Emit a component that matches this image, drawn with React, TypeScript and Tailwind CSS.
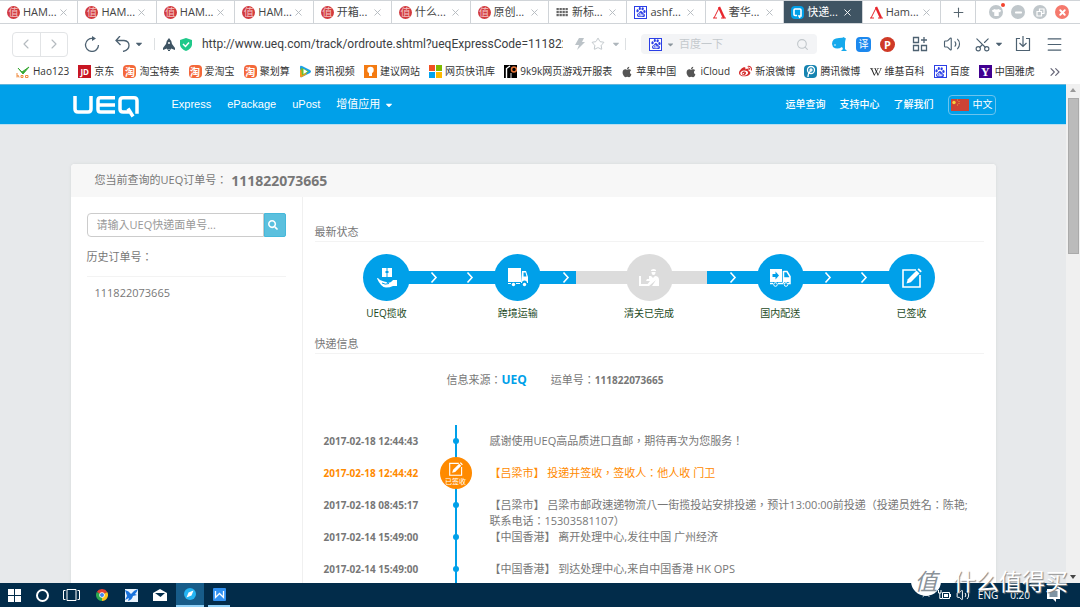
import { useState } from "react"
import type { ReactNode } from "react"
import {
  ChevronLeft,
  ChevronRight,
  ChevronsRight,
  ChevronUp,
  Menu,
  Minus,
  Plus,
  Scissors,
  Search,
  Star,
  Volume2,
  X,
} from "lucide-react"
import { FaApple, FaCaretDown, FaSearch, FaTshirt, FaWeibo, FaWikipediaW } from "react-icons/fa"
import { SiBaidu } from "react-icons/si"

/* ---------- small icons ---------- */

function Tile({ className, children }: { className: string; children?: ReactNode }) {
  return (
    <span
      className={`flex size-[13px] shrink-0 items-center justify-center overflow-hidden leading-none ${className}`}
    >
      {children}
    </span>
  )
}

function ZhiIcon() {
  return <Tile className="rounded-full bg-[#d23a3e] text-[10px] text-[#f3c4c4]">值</Tile>
}

function BaiduIcon() {
  return (
    <Tile className="border border-[#2b3fe6] bg-white text-[#2b3fe6]">
      <SiBaidu size={10} />
    </Tile>
  )
}

function GridIcon() {
  return (
    <svg viewBox="0 0 13 13" className="size-[13px] shrink-0" fill="#666">
      {[2, 5, 8].map((y) =>
        [0, 3, 6, 9].map((x) => <rect key={`${x}-${y}`} x={x + 0.5} y={y} width="2.300" height="2.200" />)
      )}
    </svg>
  )
}

function HamIcon() {
  return (
    <svg viewBox="0 0 13 13" className="size-[13px] shrink-0" fill="none" stroke="#e8262d">
      <path d="M1 12L6 2" strokeWidth="1" />
      <path d="M6 1L11 12" strokeWidth="2.4" />
      <path d="M0 12h4M8 12h5" />
    </svg>
  )
}

function UeqIcon() {
  return (
    <Tile className="rounded-sm bg-[#009fe8]">
      <svg viewBox="0 0 13 13" className="size-[13px]" fill="none" stroke="#fff" strokeWidth="1.6">
        <path d="M6 9.500H4Q3 9.500 3 8.500V4q0-1 1-1h5q1 0 1 1v6H8l1 2" />
      </svg>
    </Tile>
  )
}

function HaoIcon() {
  return (
    <svg viewBox="0 0 14 14" className="size-[14px] shrink-0" fill="none">
      <path d="M2 3l4 4 7-5-6 7z" fill="#39a935" stroke="#39a935" />
      <path d="M1 8v4.500M1 11q2-1.500 2 1.500M5 10.500h2v2H5zM9.500 10.500h2.500v2H9.500z" stroke="#f08a3c" />
    </svg>
  )
}

function TaoIcon() {
  return <Tile className="rounded-sm bg-[#f4683a] text-[10px] font-bold text-white">淘</Tile>
}

function PlayIcon() {
  return (
    <svg viewBox="0 0 13 13" className="size-[13px] shrink-0">
      <path d="M1 2q0-2 2-1l8 4q2 1.500 0 3l-8 4q-2 1-2-1z" fill="#1aa0e8" />
      <path d="M1 4v7q0 2 2 1l5-3z" fill="#f79a1c" />
      <path d="M2 2.500l8 4-7 4z" fill="#6cc02c" />
      <path d="M4.500 4l4 2.500-4 2.500z" fill="#fff" />
    </svg>
  )
}

function BulbIcon() {
  return (
    <Tile className="bg-[#f47b12]">
      <svg viewBox="0 0 13 13" fill="#fff">
        <circle cx="6.500" cy="5" r="3.200" />
        <path d="M5 8h3v3H5z" />
      </svg>
    </Tile>
  )
}

function MicrosoftIcon() {
  return (
    <span className="grid size-[13px] shrink-0 grid-cols-2 gap-px">
      <i className="bg-[#f25022]" />
      <i className="bg-[#7fba00]" />
      <i className="bg-[#00a4ef]" />
      <i className="bg-[#ffb900]" />
    </span>
  )
}

function GameIcon() {
  return (
    <Tile className="bg-black">
      <svg viewBox="0 0 13 13" fill="none">
        <path d="M2.500 13V3.500L6 1" stroke="#fff" strokeWidth="1.400" />
        <circle cx="10" cy="4.500" r="2.500" stroke="#e8763a" strokeWidth="1.500" />
        <path d="M7 8v5" stroke="#ddd" />
      </svg>
    </Tile>
  )
}

function TencentWeiboIcon() {
  return (
    <Tile className="rounded-sm bg-[#1683b0]">
      <svg viewBox="0 0 13 13" fill="none" stroke="#fff" strokeWidth="1.300">
        <circle cx="7" cy="5" r="3.500" />
        <circle cx="7" cy="5" r="1" />
        <path d="M4 12q0-4 2.500-6" />
      </svg>
    </Tile>
  )
}

/* ---------- browser chrome ---------- */

const TABS = [
  { title: "HAM...", icon: <ZhiIcon /> },
  { title: "HAM...", icon: <ZhiIcon /> },
  { title: "HAM...", icon: <ZhiIcon /> },
  { title: "HAM...", icon: <ZhiIcon /> },
  { title: "开箱...", icon: <ZhiIcon /> },
  { title: "什么...", icon: <ZhiIcon /> },
  { title: "原创...", icon: <ZhiIcon /> },
  { title: "新标...", icon: <GridIcon /> },
  { title: "ashf...", icon: <BaiduIcon /> },
  { title: "奢华...", icon: <HamIcon /> },
  { title: "快递...", icon: <UeqIcon />, active: true },
  { title: "Ham...", icon: <HamIcon /> },
]

const BOOKMARKS = [
  { label: "Hao123", icon: <HaoIcon /> },
  { label: "京东", icon: <Tile className="bg-[#c81623] text-[8px] font-bold text-white">JD</Tile> },
  { label: "淘宝特卖", icon: <TaoIcon /> },
  { label: "爱淘宝", icon: <TaoIcon /> },
  { label: "聚划算", icon: <TaoIcon /> },
  { label: "腾讯视频", icon: <PlayIcon /> },
  { label: "建议网站", icon: <BulbIcon /> },
  { label: "网页快讯库", icon: <MicrosoftIcon /> },
  { label: "9k9k网页游戏开服表", icon: <GameIcon /> },
  { label: "苹果中国", icon: <FaApple size={12} color="#555" /> },
  { label: "iCloud", icon: <FaApple size={12} color="#555" /> },
  { label: "新浪微博", icon: <FaWeibo size={13} color="#d52b2b" /> },
  { label: "腾讯微博", icon: <TencentWeiboIcon /> },
  { label: "维基百科", icon: <FaWikipediaW size={12} color="#222" /> },
  { label: "百度", icon: <BaiduIcon /> },
  {
    label: "中国雅虎",
    icon: <Tile className="bg-[#400090] font-['Liberation_Serif',serif] text-[12px] font-bold text-white">Y</Tile>,
  },
]

function TabStrip() {
  return (
    <div className="flex h-6 border-y border-[#d0d4d8] bg-white">
      {TABS.map((tab, i) => (
        <div
          key={i}
          className={`flex min-w-0 flex-1 items-center gap-[3px] border-r border-[#d0d4d8] pl-[7px] text-[11px] ${
            tab.active ? "bg-[#3f5463] text-white" : "text-[#444]"
          }`}
        >
          {tab.icon}
          <span className="w-8 whitespace-nowrap">{tab.title}</span>
          <button aria-label="关闭标签" className={tab.active ? "text-white" : "text-[#b3b9be]"}>
            <X size={11} strokeWidth={2} />
          </button>
        </div>
      ))}
      <button aria-label="新标签" className="flex w-[35px] items-center justify-center border-r border-[#d0d4d8] text-[#56656f]">
        <Plus size={15} strokeWidth={1.7} />
      </button>
      <div className="flex w-[104px] items-center gap-2 pl-[13px] text-white">
        <button aria-label="皮肤" className="relative flex size-[14px] items-center justify-center rounded-full bg-[#c0c7cb]">
          <FaTshirt size={9} />
          <span className="absolute -top-0.5 -right-0.5 size-1 rounded-full bg-[#f2442e]" />
        </button>
        <button aria-label="最小化" className="flex size-[14px] items-center justify-center rounded-full bg-[#c0c7cb]">
          <Minus size={9} strokeWidth={5} />
        </button>
        <button aria-label="还原" className="flex size-[14px] items-center justify-center rounded-full bg-[#c0c7cb]">
          <svg viewBox="0 0 9 9" className="size-[9px]" fill="none" stroke="#fff" strokeWidth="1.2">
            <path d="M1 3.500h4.500v4.500H1zM3.500 3V1H8v4.500H6" />
          </svg>
        </button>
        <button aria-label="关闭" className="flex size-[14px] items-center justify-center rounded-full bg-[#f5796d]">
          <X size={9} strokeWidth={5} />
        </button>
      </div>
    </div>
  )
}

function Toolbar() {
  const [url, setUrl] = useState("http://www.ueq.com/track/ordroute.shtml?ueqExpressCode=111822073665")

  return (
    <div className="flex h-10 items-center bg-white pr-4 pl-3 text-[#4d6171]">
      <div className="flex h-[25px] w-14 shrink-0 rounded-sm border border-[#e2e4e6] text-[#b4babf]">
        <button aria-label="后退" className="flex flex-1 items-center justify-center border-r border-[#e2e4e6]">
          <ChevronLeft size={16} strokeWidth={1.7} />
        </button>
        <button aria-label="前进" className="flex flex-1 items-center justify-center">
          <ChevronRight size={16} strokeWidth={1.7} />
        </button>
      </div>
      <button aria-label="刷新" className="ml-4">
        <svg viewBox="0 0 16 16" className="size-4" fill="none" stroke="currentColor" strokeWidth="1.300">
          <path d="M9 2.500A6.500 6.500 0 1 0 14.500 9" />
          <path d="M8 0l4 2.500-4 2.500z" fill="currentColor" stroke="none" />
        </svg>
      </button>
      <button aria-label="撤销" className="ml-[15px] flex items-center gap-[3px]">
        <svg viewBox="0 0 16 16" className="size-4" fill="none" stroke="currentColor" strokeWidth="1.300">
          <path d="M5 0L1 4.500 5.500 9M1 4.500h8q5 .5 5 5T8 15.500" />
        </svg>
        <FaCaretDown size={10} />
      </button>
      <span className="ml-2.5 h-3 w-px bg-[#dde0e2]" />
      <svg viewBox="0 0 12 13" className="ml-2 h-[13px] w-3 shrink-0" fill="#3f5463">
        <path d="M6 0q3 3 3 6l3 4v2L8 10.500v1H4v-1L0 12v-2l3-4q0-3 3-6zM5 12h2v1H5z" />
        <circle cx="6" cy="5" r="1" fill="#fff" />
      </svg>
      <svg viewBox="0 0 12 13" className="ml-[5px] h-[13px] w-3 shrink-0" fill="#1fc98a">
        <path d="M6 0l6 2v5q-1 4-6 6-5-2-6-6V2z" />
        <path d="M3 6l2.500 2.500L9 4.500" fill="none" stroke="#fff" strokeWidth="1.500" />
      </svg>
      <input
        aria-label="地址"
        value={url}
        onChange={(e) => setUrl(e.target.value)}
        className="ml-[10px] min-w-0 flex-1 font-['Roboto',sans-serif] text-[12px] text-[#3c4043] outline-none"
      />
      <svg viewBox="0 0 10 12" className="ml-3 h-3 w-[10px] shrink-0" fill="#bcc3c8">
        <path d="M4 0h5L7 4h3L2 12l2-5H0z" />
      </svg>
      <Star size={14} strokeWidth={1.3} className="ml-1.5 shrink-0 text-[#aeb6bc]" />
      <FaCaretDown size={10} className="ml-1.5 shrink-0 text-[#aeb6bc]" />
      <span className="ml-1 h-3 w-px bg-[#dde0e2]" />
      <div className="ml-[15px] flex h-5 w-44 shrink-0 items-center rounded-sm bg-[#f3f4f6] px-2">
        <BaiduIcon />
        <FaCaretDown size={9} className="mx-1 shrink-0 text-[#8a959d]" />
        <input
          aria-label="百度一下"
          placeholder="百度一下"
          className="min-w-0 flex-1 bg-transparent text-[11px] placeholder:text-[#c4c9cd] outline-none"
        />
        <Search size={13} strokeWidth={2} className="shrink-0 text-[#c0c6ca]" />
      </div>
      <svg viewBox="0 0 15 14" className="ml-[15px] h-[14px] w-[15px] shrink-0" fill="#16a9ec">
        <path d="M0 7q0-6 7-6 4 0 5-1 1 2 2 1-1 3-1 5v6l2 2H9l2-2-1-2q-5 3-9 0z" />
        <circle cx="3" cy="8" r="0.800" fill="#fff" />
      </svg>
      <span className="ml-[9px] flex size-[15px] shrink-0 items-center justify-center rounded-sm bg-[#1c88ee] text-[10px] leading-none text-white">
        译
      </span>
      <span className="ml-[9px] flex size-[15px] shrink-0 items-center justify-center rounded-full bg-[#cf3a27] text-[11px] leading-none font-bold text-white">
        P
      </span>
      <button aria-label="扩展" className="ml-[17px]">
        <svg viewBox="0 0 16 16" className="size-4" fill="none" stroke="currentColor" strokeWidth="1.300">
          <path d="M1.500 1.500h5v5h-5zM1.500 9.500h5v5h-5zM9.500 9.500h5v5h-5zM12 1v6M9 4h6" />
        </svg>
      </button>
      <button aria-label="声音" className="ml-[15px]">
        <Volume2 size={18} strokeWidth={1.5} />
      </button>
      <button aria-label="截图" className="ml-[13px] flex items-center gap-[3px]">
        <Scissors size={17} strokeWidth={1.6} className="-rotate-90" />
        <FaCaretDown size={10} />
      </button>
      <button aria-label="下载" className="ml-[11px]">
        <svg viewBox="0 0 16 16" className="size-4" fill="none" stroke="currentColor" strokeWidth="1.200">
          <path d="M5 2.500H1.500v12h13v-12H11M8 0v10M4.500 7L8 10.500 11.500 7" />
        </svg>
      </button>
      <button aria-label="菜单" className="ml-[14px]">
        <Menu size={19} strokeWidth={1.5} />
      </button>
    </div>
  )
}

function BookmarkBar() {
  return (
    <div className="flex h-5 items-start gap-3 bg-white pr-[17px] pl-4 text-[10px] text-[#333]">
      <nav className="flex min-w-0 flex-1 justify-between">
        {BOOKMARKS.map((b) => (
          <a key={b.label} href="#" className="flex h-[15px] items-center gap-[3px] whitespace-nowrap">
            {b.icon}
            {b.label}
          </a>
        ))}
      </nav>
      <button aria-label="更多书签" className="text-[#667]">
        <ChevronsRight size={16} strokeWidth={1.7} />
      </button>
    </div>
  )
}

/* ---------- ueq page ---------- */

function UeqLogo() {
  return (
    <svg role="img" aria-label="UEQ" viewBox="0 0 66 22" className="h-[22px] w-[66px]" fill="none" stroke="#fff" strokeWidth="3.500">
      <path d="M2 0v13q0 3 3 3H15q3 0 3-3V0" />
      <path d="M42 1.800H27.500q-2.500 0-2.500 2.500v9.200q0 2.500 2.500 2.500H42M25 8.900H42" />
      <path d="M56 16h-6q-3 0-3-3V4.800q0-3 3-3h11q3 0 3 3V17.700M55 12.500l5 8" />
    </svg>
  )
}

function SiteHeader() {
  return (
    <header className="h-[41px] border-y border-t-[#62b5dc] border-b-[#b9dff0] bg-[#00a0e9] text-white">
      <div className="mx-auto flex h-full max-w-[925px] items-center">
        <a href="#" className="mt-1 ml-0.5">
          <UeqLogo />
        </a>
        <nav className="ml-[33px] flex items-center gap-4 font-['Liberation_Sans','Noto_Sans_CJK_SC',sans-serif] text-[11px]">
          <a href="#">Express</a>
          <a href="#">ePackage</a>
          <a href="#">uPost</a>
          <a href="#" className="flex items-center gap-1">
            增值应用
            <FaCaretDown size={10} />
          </a>
        </nav>
        <nav className="ml-auto flex items-center gap-[14px] text-[10px] font-medium">
          <a href="#">运单查询</a>
          <a href="#">支持中心</a>
          <a href="#">了解我们</a>
          <button className="flex h-5 w-12 items-center justify-between rounded-sm border border-[#6cc4ee] px-0.5 font-normal">
            <svg viewBox="0 0 18 12" className="h-3 w-[18px]">
              <path d="M0 0h18v12H0z" fill="#cc4335" />
              <circle cx="3" cy="3.500" r="1.700" fill="#f6d13c" />
              <path d="M6 1h1M7.500 2.500h1M7.500 4.500h1M6 6h1" stroke="#e8a43c" />
            </svg>
            中文
          </button>
        </nav>
      </div>
    </header>
  )
}

function Sidebar() {
  return (
    <aside className="w-[232px] shrink-0 border-r border-[#f0f0f0] px-4 pt-4">
      <form className="flex h-6 w-[199px]" onSubmit={(e) => e.preventDefault()}>
        <input
          aria-label="UEQ快递面单号"
          placeholder="请输入UEQ快递面单号..."
          className="min-w-0 flex-1 rounded-l-sm border border-[#ccc] px-[9px] text-[11px] placeholder:text-[#999] outline-none"
        />
        <button aria-label="查询" className="flex w-[22px] items-center rounded-r-xs border border-[#46b8da] bg-[#5bc0de] pl-[3px] text-white">
          <FaSearch size={10} />
        </button>
      </form>
      <h3 className="mt-3 leading-4">历史订单号：</h3>
      <ul className="mt-[11px] border-t border-[#f3f3f3] pt-2">
        <li className="pl-2 leading-4">111822073665</li>
      </ul>
    </aside>
  )
}

function HandBoxIcon() {
  return (
    <svg viewBox="0 0 22 20" className="h-5 w-[22px]" fill="#fff">
      <path d="M6 0h4.500v3H9.500v2h1v4H6zM11.500 0H16v9h-4.500V5h1V3h-1z" />
      <path d="M1 10q1.500 0 3 2l4 1.500q3 0 3 1.500 4 0 6-3h4v6h-4q-3 1.500-7 1.500-5 0-9-9z" />
      <path d="M6 15q3 2 7 .5" stroke="#00a0e9" fill="none" />
    </svg>
  )
}

function TruckIcon() {
  return (
    <svg viewBox="0 0 22 20" className="h-5 w-[22px]" fill="#fff">
      <path d="M1 0h13v14H1z" />
      <path d="M15 3h4l2 6v6h-1a2.500 2.500 0 0 0-5 0h-1zM1 15h3v1H1zM9 15h4v1H9z" />
      <path d="M16.500 4.500h2l1 4h-3z" fill="#00a0e9" />
      <circle cx="6.500" cy="16.500" r="1.700" />
      <circle cx="17.500" cy="16.500" r="1.700" />
    </svg>
  )
}

function CustomsIcon() {
  return (
    <svg viewBox="0 0 22 20" className="h-5 w-[22px]" fill="#fff">
      <path d="M13 2q3-2 5 0v1h-5zM13.500 4h4q0 3-2 3t-2-3z" />
      <path d="M11 8h2l2 2 2-2q4 0 4 4v6h-7l4-6-7 6H8l4-5H8l1-2h2z" />
      <path d="M1 8h2v8h7v2H1z" />
    </svg>
  )
}

function DeliveryIcon() {
  return (
    <svg viewBox="0 0 22 20" className="h-5 w-[22px]" fill="none" stroke="#fff">
      <path d="M1 1h12v13H1z" fill="#fff" stroke="none" />
      <path d="M3.500 6h3V3.500L10 7.500l-3.500 4V9h-3z" fill="#00a0e9" stroke="none" />
      <path d="M14.500 3.500h3.500l3 5v7h-2M14.500 3v12.500M15 10h6M9 15.500h5M1 15.500h3" strokeWidth="1.500" />
      <path d="M15 10h6v4h-6z" fill="#fff" stroke="none" />
      <circle cx="6.500" cy="16.500" r="1.800" />
      <circle cx="17" cy="16.500" r="1.800" fill="#00a0e9" />
    </svg>
  )
}

function SignIcon({ className }: { className: string }) {
  return (
    <svg viewBox="0 0 20 20" className={className}>
      <path d="M14 2H1v17h17V7" fill="none" stroke="#fff" strokeWidth="1.600" />
      <path d="M4.500 15.500l1.300-4.300 8.700-8.700 3 3-8.700 8.700z" fill="#fff" />
      <path d="M15.500 1.500l1.300-1.300 3 3-1.300 1.300z" fill="#fff" />
    </svg>
  )
}

function Chevron() {
  return (
    <svg viewBox="0 0 8 13" className="h-[13px] w-2" fill="none" stroke="#fff" strokeWidth="1.600">
      <path d="M1.500 1.500L6 6.500l-4.500 5" />
    </svg>
  )
}

function Step({ label, icon, muted }: { label: string; icon: ReactNode; muted?: boolean }) {
  return (
    <li className="flex w-[47px] shrink-0 flex-col items-center">
      <span className={`flex size-[47px] items-center justify-center rounded-full ${muted ? "bg-[#dcdcdc]" : "bg-[#00a0e9]"}`}>
        {icon}
      </span>
      <span className="mt-1 text-[10px] leading-4 whitespace-nowrap text-[#1d4a1d]">{label}</span>
    </li>
  )
}

function FullLink() {
  return (
    <li aria-hidden className="-mx-0.5 mt-[17px] flex h-[13px] flex-1 items-center justify-center gap-7 bg-[#00a0e9]">
      <Chevron />
      <Chevron />
    </li>
  )
}

function StatusSteps() {
  return (
    <ol className="mx-auto mt-3 flex max-w-[572px]">
      <Step label="UEQ揽收" icon={<HandBoxIcon />} />
      <FullLink />
      <Step label="跨境运输" icon={<TruckIcon />} />
      <li aria-hidden className="-mx-0.5 mt-[17px] flex h-[13px] flex-1">
        <span className="flex w-[37px] justify-end bg-[#00a0e9] pr-1.5">
          <Chevron />
        </span>
        <span className="flex-1 bg-[#dcdcdc]" />
      </li>
      <Step label="清关已完成" icon={<CustomsIcon />} muted />
      <li aria-hidden className="-mx-0.5 mt-[17px] flex h-[13px] flex-1">
        <span className="flex-1 bg-[#dcdcdc]" />
        <span className="flex w-[52px] bg-[#00a0e9] pl-[22px]">
          <Chevron />
        </span>
      </li>
      <Step label="国内配送" icon={<DeliveryIcon />} />
      <FullLink />
      <Step label="已签收" icon={<SignIcon className="size-5" />} />
    </ol>
  )
}

const EVENTS = [
  { time: "2017-02-18 12:44:43", text: "感谢使用UEQ高品质进口直邮，期待再次为您服务！" },
  { time: "2017-02-18 12:44:42", text: "【吕梁市】 投递并签收，签收人：他人收 门卫", signed: true },
  {
    time: "2017-02-18 08:45:17",
    text: "【吕梁市】 吕梁市邮政速递物流八一街揽投站安排投递，预计13:00:00前投递（投递员姓名：陈艳; 联系电话：15303581107）",
  },
  { time: "2017-02-14 15:49:00", text: "【中国香港】 离开处理中心,发往中国 广州经济" },
  { time: "2017-02-14 15:49:00", text: "【中国香港】 到达处理中心,来自中国香港 HK OPS" },
]

function Timeline() {
  return (
    <ol className="mt-[37px] pl-[9px]">
      {EVENTS.map((event, i) => (
        <li key={i} className={`flex h-8 leading-4 ${event.signed ? "text-[#ff8a00]" : ""}`}>
          <time className="w-[98px] shrink-0 pt-2 text-[10px] font-bold whitespace-nowrap">{event.time}</time>
          <span className="grid w-[68px] shrink-0 place-items-center">
            <span className="col-start-1 row-start-1 h-full w-0.5 bg-[#00a0e9]" />
            {event.signed ? (
              <span className="col-start-1 row-start-1 flex size-8 flex-col items-center justify-center gap-0.5 rounded-full bg-[#ff8a00] text-[7px] leading-[7px] text-white">
                <SignIcon className="size-[14px]" />
                已签收
              </span>
            ) : (
              <span className="col-start-1 row-start-1 size-1.5 rounded-full bg-[#00a0e9]" />
            )}
          </span>
          <p className="flex-1 pt-2 pr-2">{event.text}</p>
        </li>
      ))}
    </ol>
  )
}

function TrackingPage() {
  return (
    <div className="min-w-0 flex-1 overflow-hidden bg-[#e7e9eb]">
      <SiteHeader />
      <main className="mx-auto mt-[39px] min-h-full max-w-[925px] rounded-t bg-white font-['Open_Sans','Noto_Sans_CJK_TC',sans-serif] text-[11px] text-[#777] shadow-[0_0_3px_#d4d6d8]">
        <h1 className="flex h-[33px] items-center rounded-t bg-[#f7f7f7] pl-6">
          您当前查询的UEQ订单号：
          <strong className="ml-1 text-[14px]">111822073665</strong>
        </h1>
        <div className="flex min-h-screen">
          <Sidebar />
          <section className="min-w-0 flex-1 px-3 pt-[27px]">
            <h2 className="h-[18px] border-b border-[#f3f3f3] leading-4">最新状态</h2>
            <StatusSteps />
            <h2 className="mt-[15px] h-[18px] border-b border-[#f3f3f3] leading-4">快递信息</h2>
            <div className="mt-[18px] flex items-center pl-[132px] leading-4">
              信息来源：<strong className="text-[12px] text-[#00a0e9]">UEQ</strong>
              <span className="ml-6">运单号：</span>
              <strong className="text-[10px]">111822073665</strong>
            </div>
            <Timeline />
          </section>
        </div>
      </main>
    </div>
  )
}

function ScrollBar() {
  return (
    <div aria-hidden className="flex w-[14px] shrink-0 flex-col items-center bg-[#f0f0f0] py-1">
      <span className="border-x-[3px] border-b-[4px] border-x-transparent border-b-[#999]" />
      <span className="mt-1.5 h-[156px] w-[11px] border border-[#aaa] bg-[#bbb]" />
      <span className="mt-auto border-x-[3px] border-t-[4px] border-x-transparent border-t-[#444]" />
    </div>
  )
}

/* ---------- desktop ---------- */

function TaskBar() {
  return (
    <footer className="flex h-6 shrink-0 items-center bg-[#022c4a] pr-5 pl-2 text-white">
      <button aria-label="开始" className="grid size-[13px] grid-cols-2 gap-px">
        <i className="bg-white" />
        <i className="bg-white" />
        <i className="bg-white" />
        <i className="bg-white" />
      </button>
      <button aria-label="Cortana" className="ml-[15px] size-[13px] rounded-full border-2 border-white" />
      <button aria-label="任务视图" className="ml-[14px]">
        <svg viewBox="0 0 17 12" className="h-3 w-[17px]" fill="none" stroke="#fff">
          <path d="M4 .5h9v11H4zM2.500 1.500h-2v9h2M14.500 1.500h2v9h-2" />
        </svg>
      </button>
      <button aria-label="Chrome" className="ml-4">
        <svg viewBox="0 0 12 12" className="size-3">
          <path d="M6 6L.8 3A6 6 0 0 1 11.200 3z" fill="#e34133" />
          <path d="M6 6L.8 3A6 6 0 0 0 6 12z" fill="#2da94f" />
          <path d="M6 6l5.200-3A6 6 0 0 1 6 12z" fill="#fcc31e" />
          <circle cx="6" cy="6" r="2.700" fill="#fff" />
          <circle cx="6" cy="6" r="2" fill="#4285f4" />
        </svg>
      </button>
      <button aria-label="迅雷" className="ml-[17px]">
        <svg viewBox="0 0 13 13" className="size-[13px]">
          <path d="M0 0h13v13H0z" fill="#e9f3fd" />
          <path d="M0 1q4 1 6 4 3-4 7-5-1 3-3 5l2 1-4 1q-1 4-5 5l1-3-4 2 2-4z" fill="#1872dc" />
        </svg>
      </button>
      <button aria-label="邮件" className="ml-[15px]">
        <svg viewBox="0 0 14 12" className="h-3 w-[14px]">
          <path d="M0 4l7-4 7 4v8H0z" fill="#fff" />
          <path d="M2 4h10L7.500 8z" fill="#022c4a" />
        </svg>
      </button>
      <button aria-label="浏览器" className="ml-[9px] flex h-6 w-7 items-center justify-center border-b-2 border-[#8fd0f7] bg-[#175c89]">
        <svg viewBox="0 0 12 12" className="size-3">
          <circle cx="6" cy="6" r="6" fill="#24b4f2" />
          <path d="M9.500 2.500L7.500 7.500 2.500 9.500l2-5z" fill="#fff" />
        </svg>
      </button>
      <button aria-label="WPS" className="ml-1 flex h-6 w-[22px] items-center justify-center border-b-2 border-[#8fd0f7]">
        <svg viewBox="0 0 13 13" className="size-[13px]" fill="none">
          <rect width="13" height="13" rx="1" fill="#3190f0" />
          <path d="M2.500 3v6.500l4-4 4 4V3" stroke="#fff" strokeWidth="1.300" />
        </svg>
      </button>
      <div className="ml-auto flex items-center text-[10px]">
        <ChevronUp size={12} />
        <svg viewBox="0 0 13 10" className="ml-1.5 h-[10px] w-[13px]" fill="none" stroke="#fff">
          <path d="M4.500 2.500h7v6h-7zM12.500 4v3M.5 0v3h2.500V0M1.800 3v5.500H4" />
          <path d="M6 4h4v3H6z" fill="#fff" stroke="none" />
        </svg>
        <Volume2 size={14} strokeWidth={1.7} className="ml-[5px]" />
        <span className="ml-2">ENG</span>
        <time className="ml-3">0:20</time>
        <button aria-label="通知" className="ml-[17px]">
          <svg viewBox="0 0 13 13" className="size-[13px]">
            <path d="M0 0h13v10H9v3l-3-3H0z" fill="#fff" />
            <path d="M2.500 3h8M2.500 5h8M2.500 7h8" stroke="#022c4a" />
          </svg>
        </button>
      </div>
    </footer>
  )
}

export default function App() {
  return (
    <div className="relative flex h-screen flex-col overflow-hidden font-['Open_Sans','Noto_Sans_CJK_SC',sans-serif]">
      <TabStrip />
      <Toolbar />
      <BookmarkBar />
      <div className="flex min-h-0 flex-1">
        <TrackingPage />
        <ScrollBar />
      </div>
      <TaskBar />

      {/* Watermark */}
      <div className="pointer-events-none absolute right-3 bottom-2.5 flex items-center gap-3 text-white">
        <span className="flex size-[30px] items-center justify-center rounded-full bg-white text-[23px] leading-none text-[#8a9299] italic">
          值
        </span>
        <span className="text-[23px] leading-8 [text-shadow:1px_1px_1px_#888]">什么值得买</span>
      </div>
    </div>
  )
}
